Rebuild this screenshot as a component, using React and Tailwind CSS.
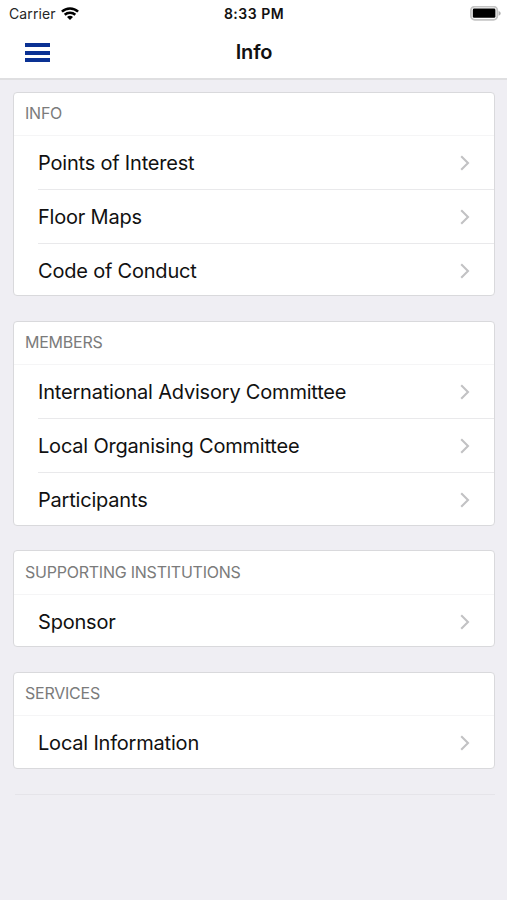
const sections = [
  {
    title: 'INFO',
    items: ['Points of Interest', 'Floor Maps', 'Code of Conduct'],
  },
  {
    title: 'MEMBERS',
    items: [
      'International Advisory Committee',
      'Local Organising Committee',
      'Participants',
    ],
  },
  { title: 'SUPPORTING INSTITUTIONS', items: ['Sponsor'] },
  { title: 'SERVICES', items: ['Local Information'] },
];

function WifiIcon() {
  return (
    <svg width="18" height="14" viewBox="0 0 18 14" fill="none" stroke="#000" strokeWidth="2.5">
      <path d="M0.9 4.6C5.4 0.3 12.6 0.3 17.1 4.6" />
      <path d="M3.7 7.7C6.7 5 11.3 5 14.3 7.7" />
      <path d="M6 9.9C7.7 8.3 10.3 8.3 12 9.9L9 12.9Z" fill="#000" stroke="none" />
    </svg>
  );
}

function BatteryIcon() {
  return (
    <svg width="32" height="16" viewBox="0 0 32 16">
      <rect x="0.9" y="0.6" width="26.4" height="13.2" rx="3.8" fill="#fff" stroke="#c4c4c4" strokeWidth="1.8" />
      <rect x="2.8" y="2.6" width="22.6" height="9.2" rx="1.4" fill="#000" />
      <path d="M28.6 4.9C31.4 5.9 31.4 8.7 28.6 9.7Z" fill="#b0b0b0" />
    </svg>
  );
}

function Chevron() {
  return (
    <svg width="10" height="16" viewBox="0 0 10 16" fill="none" stroke="#c2c2c4" strokeWidth="2.1">
      <path d="M1.2 1.2L8 8L1.2 14.8" />
    </svg>
  );
}

function StatusBar() {
  return (
    <div className="grid grid-cols-3 items-center h-[27px] pl-[9px] pr-[5px]">
      <div className="flex items-center gap-[5px] text-[14px] text-[#262626] tracking-[0.1px]">
        <span>Carrier</span>
        <WifiIcon />
      </div>
      <div className="text-center text-[14px] font-semibold text-[#111] tracking-[0.5px] pr-[3px]">8:33 PM</div>
      <div className="flex justify-end">
        <BatteryIcon />
      </div>
    </div>
  );
}

function NavBar() {
  return (
    <div className="grid grid-cols-3 items-center h-[51px] px-[25px]">
      <button className="flex flex-col gap-[3.5px] w-[25px]">
        <span className="h-1 bg-[#0a3193]" />
        <span className="h-1 bg-[#0a3193]" />
        <span className="h-1 bg-[#0a3193]" />
      </button>
      <h1 className="text-center text-[20px] font-semibold text-[#111] tracking-[-0.2px] pl-px pb-px">Info</h1>
    </div>
  );
}

function Section({ title, items }) {
  return (
    <section className="bg-white border border-[#d9d9dc] rounded-[4px] overflow-hidden">
      <h2 className="flex items-center h-[42.5px] pl-[11px] pb-[1.6px] text-[16px] text-[#7b7b7b] tracking-[-0.23px]">
        {title}
      </h2>
      <ul className="-mb-[1.2px]">
        {items.map((item, idx) => (
          <li key={item} className={idx === 0 ? 'border-t border-[#f5f5f6]' : 'pl-6'}>
            <div
              className={
                idx === 0
                  ? 'flex items-center justify-between h-[52.8px] pt-[1.4px] pl-6 pr-6'
                  : 'flex items-center justify-between h-[53.8px] pt-[1.4px] pr-6 border-t border-[#e9e9eb]'
              }
            >
              <span className="text-[20px] text-[#111] tracking-[-0.2px]">{item}</span>
              <Chevron />
            </div>
          </li>
        ))}
      </ul>
    </section>
  );
}

export default function App() {
  return (
    <div className="h-[900px] bg-[#efeef3] font-['Inter',sans-serif] overflow-hidden">
      <header className="h-20 bg-white border-b-2 border-[#dfdfe1]">
        <StatusBar />
        <NavBar />
      </header>
      <main className="flex flex-col gap-[24.6px] pt-[11.6px] pl-[13px] pr-3">
        {sections.map((section) => (
          <Section key={section.title} title={section.title} items={section.items} />
        ))}
        <hr className="ml-0.5 border-[#e5e4e9]" />
      </main>
    </div>
  );
}
